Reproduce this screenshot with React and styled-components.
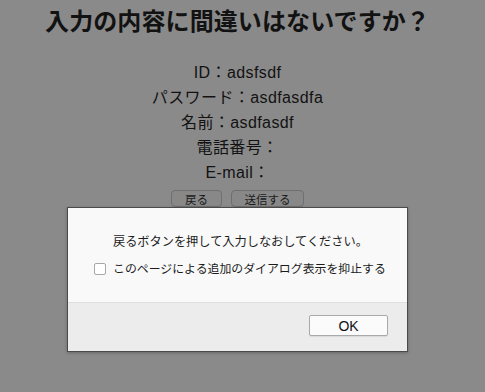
import React from "react";
import styled, { createGlobalStyle } from "styled-components";

const GlobalStyle = createGlobalStyle`
	html, body {
		margin: 0;
		padding: 0;
		background: #8a8a8a;
	}
	body {
		font-family: "Liberation Sans", "Noto Sans CJK JP", sans-serif;
		color: #121212;
	}
`;

const Page = styled.div`
	position: relative;
	width: 475px;
	height: 392px;
	display: flex;
	flex-direction: column;
	align-items: center;
`;

const Title = styled.h1`
	margin: 8px 0 0;
	font-size: 24px;
	line-height: 28px;
	font-weight: bold;
	letter-spacing: 0.1px;
`;

const Fields = styled.div`
	margin-top: 24px;
	display: flex;
	flex-direction: column;
	align-items: center;
`;

const Field = styled.div`
	font-size: 16px;
	line-height: 25px;
	letter-spacing: 0.4px;
`;

const Actions = styled.div`
	margin-top: 5px;
	display: flex;
	gap: 9px;
`;

const PageButton = styled.button`
	height: 17px;
	width: ${(p) => p.width}px;
	padding: 0;
	font-family: inherit;
	font-size: 11.5px;
	color: #1a1a1a;
	background: #888;
	border: 1px solid #6f6f6f;
	border-radius: 4px;
`;

const Dialog = styled.div`
	position: absolute;
	left: 67px;
	top: 207px;
	width: 339px;
	height: 143px;
	border: 1px solid #4a4a4a;
	background: #f9f9f9;
	display: flex;
	flex-direction: column;
	box-shadow: 0 1px 3px rgba(0, 0, 0, 0.25);
`;

const DialogBody = styled.div`
	height: 94px;
	padding: 0 0 0 26px;
	display: flex;
	flex-direction: column;
	border-bottom: 1px solid #dedede;
`;

const Message = styled.p`
	margin: 25px 0 0 19px;
	font-size: 12.2px;
	line-height: 18px;
	color: #1c1c1c;
`;

const CheckRow = styled.label`
	margin-top: 9px;
	display: flex;
	align-items: center;
	gap: 7px;
	font-size: 11.9px;
	line-height: 18px;
	color: #1c1c1c;
`;

const Box = styled.span`
	width: 10px;
	height: 10px;
	border: 1px solid #a8a8a8;
	border-radius: 2px;
	background: #fff;
`;

const DialogFooter = styled.div`
	flex: 1;
	background: #ececec;
	display: flex;
	justify-content: flex-end;
	align-items: flex-start;
	padding: 12px 19px 0 0;
`;

const OkButton = styled.button`
	width: 79px;
	height: 21px;
	padding: 0;
	font-family: inherit;
	font-size: 14px;
	color: #111;
	background: #fbfbfb;
	border: 1px solid #a9a9a9;
	border-radius: 2px;
	box-shadow: 0 1px 1px rgba(0, 0, 0, 0.08);
`;

const fields = [
	"ID：adsfsdf",
	"パスワード：asdfasdfa",
	"名前：asdfasdf",
	"電話番号：",
	"E-mail：",
];

export default function App() {
	return (
		<Page>
			<GlobalStyle />
			<Title>入力の内容に間違いはないですか？</Title>
			<Fields>
				{fields.map((f) => (
					<Field key={f}>{f}</Field>
				))}
			</Fields>
			<Actions>
				<PageButton width={51}>戻る</PageButton>
				<PageButton width={73}>送信する</PageButton>
			</Actions>
			<Dialog>
				<DialogBody>
					<Message>戻るボタンを押して入力しなおしてください。</Message>
					<CheckRow>
						<Box />
						このページによる追加のダイアログ表示を抑止する
					</CheckRow>
				</DialogBody>
				<DialogFooter>
					<OkButton>OK</OkButton>
				</DialogFooter>
			</Dialog>
		</Page>
	);
}
